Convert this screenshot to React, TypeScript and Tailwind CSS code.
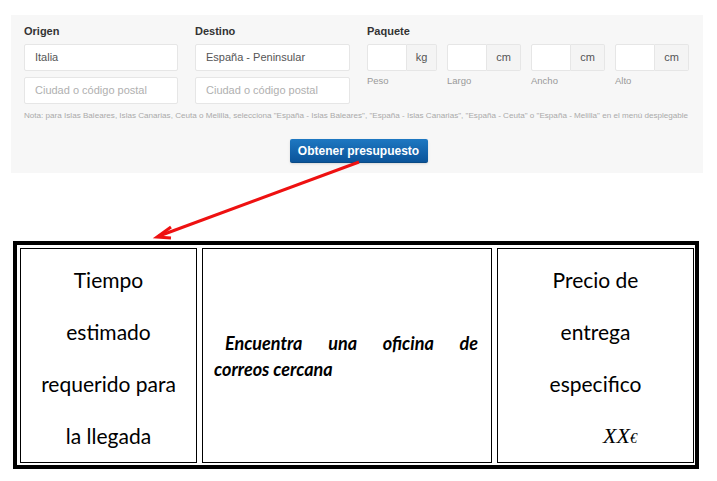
import React from "react";

const TextInput = ({ value, placeholder, w }: { value?: string; placeholder?: string; w: string }) => (
  <div className={`${w} h-[27px] bg-white border border-[#e6e6e6] rounded-[2px] flex items-center px-[10px] text-[11px]`}>
    {value ? <span className="text-[#555]">{value}</span> : <span className="text-[#b0b0b0]">{placeholder}</span>}
  </div>
);

const Measure = ({ unit, label, addon }: { unit: string; label: string; addon: string }) => (
  <div className="flex flex-col">
    <div className="flex h-[27px]">
      <div className="w-[40px] bg-white border border-[#e6e6e6] rounded-l-[2px]" />
      <div className={`${addon} bg-[#f4f4f4] border border-l-0 border-[#e6e6e6] rounded-r-[2px] flex items-center justify-center text-[11px] text-[#555]`}>
        {unit}
      </div>
    </div>
    <div className="text-[9.5px] text-[#999] mt-[3px]">{label}</div>
  </div>
);

export default function App() {
  return (
    <div className="relative w-[717px] h-[481px] bg-white font-['Liberation_Sans',Arial,sans-serif] overflow-hidden">
      <div className="pt-[15px] pl-[11px]">
        <div className="w-[692px] h-[158px] bg-[#f7f7f7] pt-[8px] px-[13px]">
          <div className="flex">
            <div className="w-[154px]">
              <div className="text-[11px] font-bold text-[#333] h-[16px] leading-[16px] mb-[5px]">Origen</div>
              <TextInput value="Italia" w="w-[154px]" />
              <div className="h-[6px]" />
              <TextInput placeholder="Ciudad o código postal" w="w-[154px]" />
            </div>
            <div className="w-[155px] ml-[17px]">
              <div className="text-[11px] font-bold text-[#333] h-[16px] leading-[16px] mb-[5px]">Destino</div>
              <TextInput value="España - Peninsular" w="w-[155px]" />
              <div className="h-[6px]" />
              <TextInput placeholder="Ciudad o código postal" w="w-[155px]" />
            </div>
            <div className="ml-[17px]">
              <div className="text-[11px] font-bold text-[#333] h-[16px] leading-[16px] mb-[5px]">Paquete</div>
              <div className="flex gap-[10px]">
                <Measure unit="kg" label="Peso" addon="w-[30px]" />
                <Measure unit="cm" label="Largo" addon="w-[34px]" />
                <Measure unit="cm" label="Ancho" addon="w-[34px]" />
                <Measure unit="cm" label="Alto" addon="w-[34px]" />
              </div>
            </div>
          </div>
          <div className="mt-[7px] text-[8.1px] text-[#aaa] whitespace-nowrap leading-[10px]">
            Nota: para Islas Baleares, Islas Canarias, Ceuta o Melilla, selecciona "España - Islas Baleares", "España - Islas Canarias", "España - Ceuta" o "España - Melilla" en el menú desplegable
          </div>
          <div className="flex justify-center mt-[18px] pl-[3px]">
            <button className="w-[138px] h-[24px] rounded-[2px] bg-gradient-to-b from-[#1e78c2] to-[#0b549a] border-b border-[#0a4a85] text-white text-[12px] font-bold shadow-sm">
              Obtener presupuesto
            </button>
          </div>
        </div>
      </div>

      <div className="ml-[13px] mt-[68px] w-[686px] h-[228px] border-[4px] border-black p-[3px] pr-[1px] pb-[2px] flex gap-[5px] font-['Lato','Open_Sans',sans-serif] text-black">
        <div className="w-[177px] h-full border border-black flex flex-col items-center pt-[5px] text-[21px] leading-[52px]">
          <div>Tiempo</div>
          <div>estimado</div>
          <div>requerido para</div>
          <div>la llegada</div>
        </div>
        <div className="w-[290px] h-full border border-black flex flex-col justify-center pl-[11px] pr-[13px] text-[18px] font-bold italic leading-[26px]">
          <div className="flex justify-between pl-[11px]">
            <span>Encuentra</span>
            <span>una</span>
            <span>oficina</span>
            <span>de</span>
          </div>
          <div>correos cercana</div>
        </div>
        <div className="w-[197px] h-full border border-black flex flex-col pt-[5px] text-[21px] leading-[52px]">
          <div className="text-center">Precio de</div>
          <div className="text-center">entrega</div>
          <div className="text-center">especifico</div>
          <div className="pl-[105px] font-['Liberation_Serif',serif] italic text-[22px]">
            XX<span className="text-[14px]">€</span>
          </div>
        </div>
      </div>

      <svg className="absolute left-0 top-0 pointer-events-none" width="717" height="481">
        <line x1="359" y1="162" x2="159" y2="236" stroke="#ee1111" strokeWidth="3" />
        <polyline points="171,227 157,237 171,238" fill="none" stroke="#ee1111" strokeWidth="3" />
      </svg>
    </div>
  );
}
